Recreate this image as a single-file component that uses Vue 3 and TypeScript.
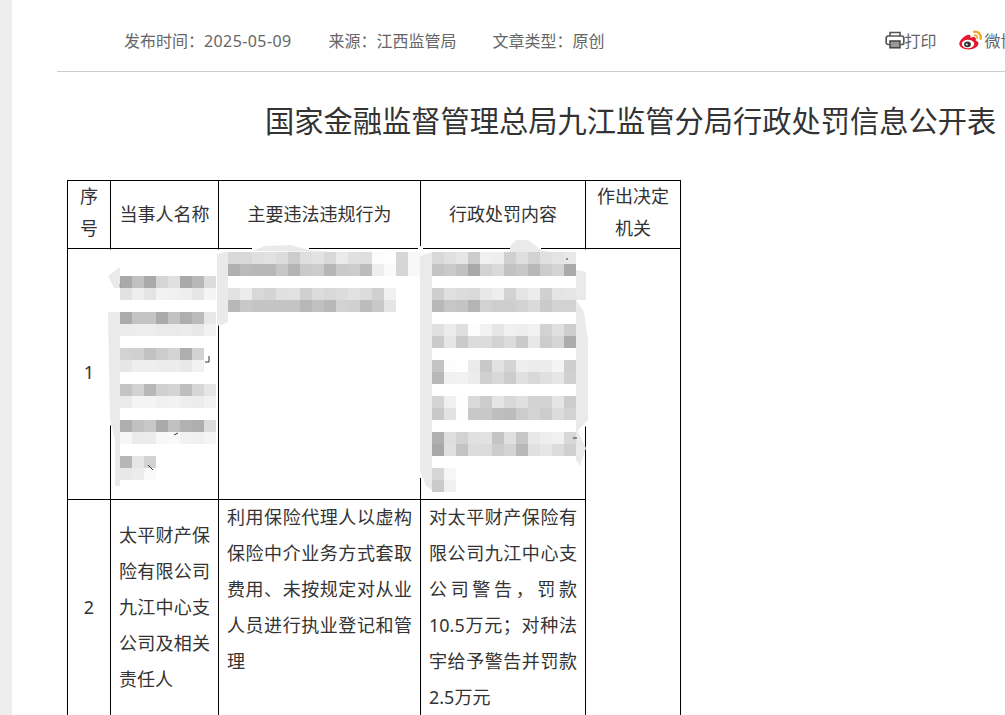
<script setup lang="ts">
interface MosaicRow { x: number; y: number; cells: string }

const rows: MosaicRow[] = [
  { x: 120, y: 276, cells: 'a9 c0 aa d5 e0 a9 b8 dc' },
  { x: 120, y: 288, cells: 'e2 ee e4 f2 f0 ee e6 f4' },
  { x: 120, y: 312, cells: 'ab c3 c4 aa c2 ae bb e8' },
  { x: 120, y: 324, cells: 'ec ed ed ea ea ec e8 f2' },
  { x: 120, y: 348, cells: 'd2 d0 c2 cc d4 ae d2' },
  { x: 120, y: 360, cells: 'e6 ee ee ec ec e8 f2' },
  { x: 120, y: 384, cells: 'c4 d2 b8 d0 d4 be d6 e6' },
  { x: 120, y: 396, cells: 'ea f4 f4 f0 f2 ee ec f2' },
  { x: 120, y: 420, cells: 'ae c0 c8 aa c0 b2 ae dc' },
  { x: 120, y: 432, cells: 'f6 ea ec f8 fa f2 f0 f4' },
  { x: 120, y: 456, cells: 'b6 e6 d2' },
  { x: 120, y: 468, cells: 'e8 ec fa' },
  { x: 228, y: 252, cells: 'd8 d8 df e2 dc cc de e2 d8 ea e0 de fc fe d6 f8' },
  { x: 228, y: 264, cells: 'b0 ba b8 b8 c6 b4 ca cc b6 ca cc bc ee fa d6 f8' },
  { x: 228, y: 288, cells: 'e2 ec d8 d4 e0 e2 d0 dc d8 dc e2 dc d0 f0' },
  { x: 228, y: 300, cells: 'b8 c8 c4 c4 c4 c4 b8 c0 b8 d2 d0 bc c8 e4' },
  { x: 432, y: 252, cells: 'd8 e0 e6 cc f0 ee d0 de d2 e0 e4 e8' },
  { x: 432, y: 264, cells: 'c4 ca c0 a8 d2 da c2 c8 b8 cc d4 aa' },
  { x: 432, y: 288, cells: 'ce e0 dc da e8 ee d2 e4 ec d0 e4 e6' },
  { x: 432, y: 300, cells: 'b8 c6 c4 b4 d2 ce ce d2 da ca d2 d2' },
  { x: 432, y: 324, cells: 'e0 ec de fc f2 e6 f0 ee f2 d2 e0 ce' },
  { x: 432, y: 336, cells: 'ca e6 ca dc dc d2 dc ca e8 cc d6 ac' },
  { x: 432, y: 360, cells: 'c4 fc ff ea c8 e2 d4 ee ec ec f4 ce' },
  { x: 432, y: 372, cells: 'b8 f0 f2 ec d0 d8 cc e0 d8 e0 e6 d0' },
  { x: 432, y: 396, cells: 'd4 f0 fe da cc e4 d8 e0 d2 d2 e4 cc' },
  { x: 432, y: 408, cells: 'c8 e2 fe c8 c8 be bc cc d4 cc dc d2' },
  { x: 432, y: 432, cells: 'b0 de d2 e0 e2 c4 e0 c6 e8 ee f0 d8' },
  { x: 432, y: 444, cells: 'a8 e0 c4 dc dc cc d4 b8 e0 e6 dc d0' },
  { x: 432, y: 468, cells: 'd6 f6' },
  { x: 432, y: 480, cells: 'ca f0' },
]

const tiles = rows.flatMap((row) =>
  row.cells.split(' ').map((c, i) => ({
    key: `${row.x}-${row.y}-${i}`,
    x: row.x + i * 12,
    y: row.y,
    fill: `#${c}${c}${c}`,
  })),
)
</script>

<template>
  <div class="page">
    <div class="strip"></div>
    <main class="article">
      <header class="meta">
        <div class="info">
          <span>发布时间：<span class="date">2025-05-09</span></span>
          <span>来源：江西监管局</span>
          <span class="type">文章类型：原创</span>
        </div>
        <div class="share">
          <span class="share-item print">
            <svg width="20" height="18" viewBox="0 0 20 18" fill="none">
              <path d="M5 5V1.5h10V5" stroke="#555" stroke-width="1.6" />
              <path d="M4.5 13.5H3A1.8 1.8 0 0 1 1.2 11.700V7A2 2 0 0 1 3.200 5h13.600a2 2 0 0 1 2 2v4.700a1.800 1.800 0 0 1-1.800 1.800h-1.500" stroke="#555" stroke-width="1.700" />
              <rect x="5" y="10" width="10" height="6.800" fill="#999" stroke="#444" stroke-width="1.500" />
            </svg>
            打印
          </span>
          <span class="share-item weibo">
            <svg width="24" height="20" viewBox="0 0 24 20">
              <path d="M9.500 4.500C5 6 .3 10.500 .3 13.800c0 3.200 4.200 5.700 9.200 5.700 5.800 0 10-3.200 10-6 0-1.800-1.600-2.600-2.800-3 .5-1.600.2-2.900-1-3.300-1.200-.4-3 .1-4.400.8 .5-1.500.4-2.700-.4-3.100-.2-.1-.4-.1-1.400.4z" fill="#e6162d" />
              <ellipse cx="9" cy="14" rx="6.200" ry="4.200" fill="#fff" />
              <ellipse cx="8.500" cy="14.300" rx="3.400" ry="2.900" fill="#333" />
              <circle cx="7.800" cy="14.600" r="1" fill="#fff" />
              <path d="M15 1.800c3.800-.8 7.600 2.400 6.600 7" fill="none" stroke="#f5a623" stroke-width="2.400" stroke-linecap="round" />
              <path d="M15.500 5.300c1.800-.3 3.200 1.100 2.700 3" fill="none" stroke="#f5a623" stroke-width="1.700" stroke-linecap="round" />
            </svg>
            微博
          </span>
        </div>
      </header>

      <h1 class="title">国家金融监督管理总局九江监管分局行政处罚信息公开表</h1>

      <table class="penalty">
        <colgroup>
          <col class="c1" />
          <col class="c2" />
          <col class="c3" />
          <col class="c4" />
          <col class="c5" />
        </colgroup>
        <thead>
          <tr>
            <th class="two"><div class="cell">序号</div></th>
            <th>当事人名称</th>
            <th>主要违法违规行为</th>
            <th>行政处罚内容</th>
            <th class="two"><div class="cell">作出决定机关</div></th>
          </tr>
        </thead>
        <tbody>
          <tr class="hidden-row">
            <td class="num"><div class="first">1</div></td>
            <td></td>
            <td></td>
            <td></td>
            <td rowspan="2"></td>
          </tr>
          <tr>
            <td class="num"><div class="cell">2</div></td>
            <td><div class="cell">太平财产保险有限公司九江中心支公司及相关责任人</div></td>
            <td class="top"><div class="cell">利用保险代理人以虚构保险中介业务方式套取费用、未按规定对从业人员进行执业登记和管理</div></td>
            <td class="top"><div class="cell">对太平财产保险有限公司九江中心支公司警告，罚款10.5万元；对种法宇给予警告并罚款2.5万元</div></td>
          </tr>
        </tbody>
      </table>
    </main>

    <svg class="redaction" width="1005" height="715" viewBox="0 0 1005 715" aria-hidden="true">
      <g fill="#fff">
        <rect x="108" y="249.500" width="5" height="176" />
        <rect x="216" y="249.500" width="5" height="76" />
        <rect x="252" y="246" width="57" height="4" />
        <rect x="418" y="246" width="5" height="134" />
        <rect x="418" y="392" width="5" height="86" />
        <rect x="510" y="246" width="31" height="4" />
        <rect x="583" y="249.500" width="5" height="177" />
      </g>
      <g fill="#eaeaea">
        <polygon points="108,276 120,267 120,288 114,288" />
        <polygon points="108,312 120,312 120,486 115,486 115,440 110,420" />
        <polygon points="217,254 228,251 228,322 222,325 217,325" />
        <polygon points="252,251 265,246 290,245 309,250 330,252" />
        <polygon points="420,256 432,252 432,490 436,492 426,486 420,470" />
        <polygon points="510,246 516,240 528,240 541,250 576,258 576,252 510,252" />
        <polygon points="576,270 586,272 586,300 576,300" />
        <polygon points="576,300 584,312 588,340 588,420 578,430 578,432 586,448 580,466 576,460" />
      </g>
      <rect
        v-for="t in tiles"
        :key="t.key"
        :x="t.x"
        :y="t.y"
        width="12"
        height="12"
        :fill="t.fill"
      />
      <g fill="none" stroke="#333" stroke-width="1">
        <path d="M205 362h4v-6" />
        <path d="M174 435l4-2" />
        <path d="M148 465l5 5" />
        <path d="M573 438h4" />
        <path d="M120 284v3" stroke="#a86" />
        <path d="M566 259h2" />
      </g>
    </svg>
  </div>
</template>

<style>
html,
body {
  margin: 0;
  overflow: hidden;
  background: #fff;
}
</style>

<style scoped>
.page {
  position: relative;
  display: flex;
  width: 1005px;
  height: 715px;
  overflow: hidden;
  background: #fff;
  font-family: "Noto Sans", "Noto Sans CJK SC", sans-serif;
  color: #333;
}

.strip {
  flex: 0 0 12px;
  background: #eee;
}

.article {
  flex: 0 0 auto;
  width: 936px;
  margin-left: 45px;
}

.meta {
  display: flex;
  align-items: center;
  height: 72px;
  width: 948px;
  padding: 9px 0 0 67px;
  box-sizing: border-box;
  border-bottom: 1px solid #ccc;
  font-size: 16px;
  color: #666;
  white-space: nowrap;
}

.info {
  display: flex;
  gap: 37px;
  flex: 0 0 auto;
  padding-top: 0;
}

.date {
  letter-spacing: 0.4px;
}

.type {
  margin-left: -1px;
}

.share {
  display: flex;
  align-items: center;
  gap: 22px;
  flex: 0 0 auto;
  margin-left: 280px;
}

.share-item {
  display: flex;
  align-items: center;
}

.print {
  gap: 0;
}

.weibo {
  gap: 2px;
}

.title {
  margin: 29px 0 39px;
  padding-left: 208px;
  font-size: 29.250px;
  line-height: 40px;
  font-weight: 400;
  white-space: nowrap;
  color: #333;
}

.penalty {
  width: 613px;
  margin-left: 10px;
  border-collapse: collapse;
  table-layout: fixed;
  font-size: 18px;
}

.c1 { width: 43px; }
.c2 { width: 108px; }
.c3 { width: 202px; }
.c4 { width: 165px; }
.c5 { width: 95px; }

.penalty th,
.penalty td {
  border: 1px solid #000;
  padding: 0 8px;
}

.penalty th {
  height: 67px;
  padding-bottom: 1px;
  box-sizing: border-box;
  font-weight: 400;
  line-height: 32px;
  text-align: center;
}

.penalty th.two {
  padding-bottom: 3px;
}

.cell {
  margin: -1px 0 1px;
}

.first {
  margin: -2px 0 2px;
}

.penalty td {
  line-height: 36px;
  text-align: justify;
  vertical-align: middle;
}

.penalty td.top {
  vertical-align: top;
}

.penalty td.num {
  padding: 0;
  text-align: center;
}

.hidden-row td {
  height: 250px;
}

.redaction {
  position: absolute;
  top: 0;
  left: 0;
  pointer-events: none;
}
</style>
